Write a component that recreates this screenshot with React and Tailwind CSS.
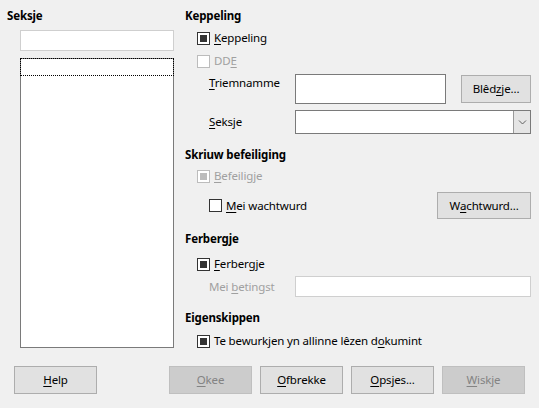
import React from 'react';

// Label text with one mnemonic letter underlined
const Mn = ({ t, u }) => {
  if (u === undefined || u < 0) return <>{t}</>;
  return (
    <>
      {t.slice(0, u)}
      <span className="underline decoration-1 underline-offset-[2px]">{t[u]}</span>
      {t.slice(u + 1)}
    </>
  );
};

const Check = ({ checked, disabled }) => (
  <span
    className={`w-[13px] h-[13px] shrink-0 border bg-white flex items-center justify-center ${
      disabled ? 'border-[#bcbcbc]' : 'border-[#333333]'
    }`}
  >
    {checked && <span className={`w-[7px] h-[7px] ${disabled ? 'bg-[#bcbcbc]' : 'bg-[#333333]'}`} />}
  </span>
);

const CheckRow = ({ label, u, checked, disabled, className = '' }) => (
  <div className={`flex items-center gap-[4px] h-[16px] ${className}`}>
    <Check checked={checked} disabled={disabled} />
    <span className={disabled ? 'text-[#a0a0a0]' : 'text-black'}>
      <Mn t={label} u={u} />
    </span>
  </div>
);

const Button = ({ label, u, disabled, className = '' }) => (
  <div
    className={`flex items-center justify-center border ${
      disabled ? 'bg-[#cccccc] border-[#bfbfbf] text-[#838383]' : 'bg-[#e1e1e1] border-[#adadad] text-black'
    } ${className}`}
  >
    <Mn t={label} u={u} />
  </div>
);

const Heading = ({ children, className = '' }) => (
  <div className={`font-bold h-[16px] ${className}`}>{children}</div>
);

export default function App() {
  return (
    <div
      className="w-[539px] h-[408px] bg-[#f0f0f0] flex flex-col text-[11.5px] leading-[16px] tracking-[-0.15px] text-black overflow-hidden"
      style={{ fontFamily: '"Noto Sans", sans-serif' }}
    >
      <div className="flex h-[350px]">
        {/* Left: section list */}
        <div className="w-[185px] pl-[7px] pt-[8px] flex flex-col">
          <Heading>Seksje</Heading>
          <div className="ml-[13px] mt-[6px] w-[154px] h-[21px] bg-white border border-[#cfcfcf]" />
          <div className="ml-[13px] mt-[7px] w-[154px] h-[290px] bg-white border border-[#7a7a7a]">
            <div className="-m-px h-[18px] border border-dotted border-black" />
          </div>
        </div>

        {/* Right: options */}
        <div className="flex-1 pt-[8px] pr-[8px] flex flex-col">
          <Heading>Keppeling</Heading>
          <CheckRow className="mt-[6px] ml-[12px]" label="Keppeling" u={0} checked />
          <CheckRow className="mt-[7px] ml-[12px]" label="DDE" u={2} disabled />

          <div className="mt-[5px] pl-[24px] flex items-start">
            <span className="w-[86px] pt-[1px]">
              <Mn t="Triemnamme" u={0} />
            </span>
            <div className="w-[151px] h-[30px] bg-white border border-[#7a7a7a]" />
            <Button className="ml-[15px] mt-[1px] w-[70px] h-[28px]" label="Blêdzje..." u={4} />
          </div>

          <div className="mt-[6px] pl-[24px] flex items-center">
            <span className="w-[86px]">
              <Mn t="Seksje" u={0} />
            </span>
            <div className="flex-1 h-[24px] bg-white border border-[#7a7a7a] flex justify-end">
              <div className="w-[17px] h-full bg-[#e5e5e5] border-l border-[#9a9a9a] flex items-center justify-center">
                <svg width="9" height="6" viewBox="0 0 9 6">
                  <path d="M1 1.5 L4.5 5 L8 1.5" fill="none" stroke="#606060" strokeWidth="1" />
                </svg>
              </div>
            </div>
          </div>

          <Heading className="mt-[13px]">Skriuw befeiliging</Heading>
          <CheckRow className="mt-[5px] ml-[12px]" label="Befeiligje" u={0} checked disabled />
          <div className="mt-[8px] pl-[24px] flex items-center h-[27px]">
            <CheckRow label="Mei wachtwurd" u={0} />
            <Button className="ml-auto w-[94px] h-[27px]" label="Wachtwurd..." u={1} />
          </div>

          <Heading className="mt-[12px]">Ferbergje</Heading>
          <CheckRow className="mt-[9px] ml-[12px]" label="Ferbergje" u={0} checked />
          <div className="mt-[4px] pl-[24px] flex items-center">
            <span className="w-[86px] text-[#a0a0a0]">
              <Mn t="Mei betingst" u={4} />
            </span>
            <div className="flex-1 h-[21px] bg-white border border-[#cfcfcf]" />
          </div>

          <Heading className="mt-[13px]">Eigenskippen</Heading>
          <CheckRow className="mt-[7px] ml-[12px]" label="Te bewurkjen yn allinne lêzen dokumint" u={31} checked />
        </div>
      </div>

      <div className="mt-[16px] pl-[14px] flex">
        <Button className="w-[83px] h-[28px]" label="Help" u={0} />
        <Button className="ml-[72px] w-[83px] h-[28px]" label="Okee" u={0} disabled />
        <Button className="ml-[8px] w-[83px] h-[28px]" label="Ofbrekke" u={0} />
        <Button className="ml-[8px] w-[83px] h-[28px]" label="Opsjes..." u={0} />
        <Button className="ml-[8px] w-[83px] h-[28px]" label="Wiskje" u={0} disabled />
      </div>
    </div>
  );
}
